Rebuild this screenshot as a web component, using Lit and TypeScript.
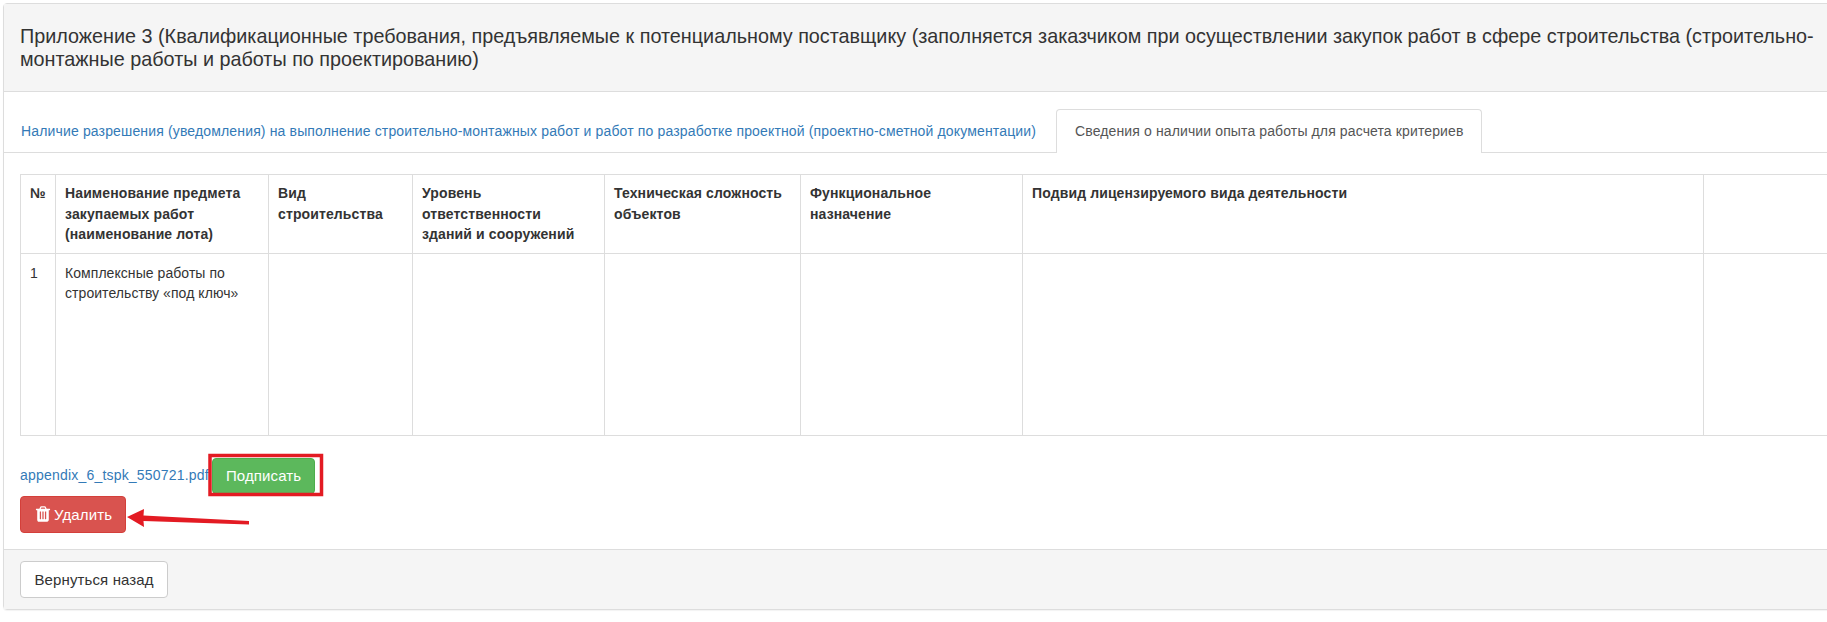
import { LitElement, html, css, svg } from "lit";
import { customElement } from "lit/decorators.js";

const COLS = [35, 213, 144, 192, 196, 222, 681, 163];
const HEADERS = [
  html`№`,
  html`Наименование предмета<br />закупаемых работ<br />(наименование лота)`,
  html`Вид<br />строительства`,
  html`Уровень<br />ответственности<br />зданий и сооружений`,
  html`Техническая сложность<br />объектов`,
  html`Функциональное<br />назначение`,
  html`Подвид лицензируемого вида деятельности`,
  html``,
];
const TRASH =
  "M704 1376v-704q0-14-9-23t-23-9h-64q-14 0-23 9t-9 23v704q0 14 9 23t23 9h64q14 0 23-9t9-23zm256 0v-704q0-14-9-23t-23-9h-64q-14 0-23 9t-9 23v704q0 14 9 23t23 9h64q14 0 23-9t9-23zm256 0v-704q0-14-9-23t-23-9h-64q-14 0-23 9t-9 23v704q0 14 9 23t23 9h64q14 0 23-9t9-23zm-544-992h448l-48-117q-7-9-17-11h-317q-10 2-17 11zm928 32v64q0 14-9 23t-23 9h-96v948q0 83-47 143.5t-113 60.5h-832q-66 0-113-58.5t-47-141.5v-952h-96q-14 0-23-9t-9-23v-64q0-14 9-23t23-9h309l70-167q15-37 54-63t79-26h320q40 0 79 26t54 63l70 167h309q14 0 23 9t9 23z";

@customElement("app-root")
export class AppRoot extends LitElement {
  static styles = css`
    :host {
      display: block;
      position: relative;
      width: 100%;
      height: 622px;
      overflow: hidden;
      background: #fff;
      font-family: "Liberation Sans", Arial, sans-serif;
      font-size: 14px;
      color: #333;
    }
    .panel {
      margin: 3px 0 0 3px;
      width: 1880px;
      border: 1px solid #ddd;
      border-radius: 4px;
      box-sizing: border-box;
      box-shadow: 0 1px 1px rgba(0, 0, 0, 0.05);
    }
    .heading {
      background: #f5f5f5;
      border-bottom: 1px solid #ddd;
      padding: 21px 16px 21px;
      font-size: 19.8px;
      line-height: 22.5px;
      font-weight: 400;
      margin: 0;
      color: #333;
    }
    .heading span {
      display: block;
      width: 1810px;
    }
    .tabs {
      display: flex;
      margin: 17px 0 0;
      border-bottom: 1px solid #ddd;
      height: 43px;
    }
    .tab {
      display: block;
      padding: 11px 18px;
      height: 20px;
      line-height: 20px;
      border: 1px solid transparent;
      border-bottom: 0;
      border-radius: 4px 4px 0 0;
      color: #337ab7;
      white-space: nowrap;
      letter-spacing: 0.15px;
    }
    .tab.first {
      margin-left: -2px;
      padding-right: 19px;
    }
    .tab.active {
      color: #555;
      background: #fff;
      border-color: #ddd;
      height: 21px;
      padding-bottom: 11px;
      position: relative;
      z-index: 1;
      letter-spacing: 0.12px;
    }
    .body {
      padding: 21px 16px 16px;
    }
    table {
      border-collapse: collapse;
      table-layout: fixed;
      width: 100%;
    }
    th,
    td {
      border: 1px solid #ddd;
      padding: 8px 9px;
      vertical-align: top;
      text-align: left;
      line-height: 20.6px;
    }
    th {
      font-weight: 700;
      color: #333;
      letter-spacing: 0.12px;
    }
    td {
      padding-top: 9px;
      letter-spacing: 0.06px;
    }
    tbody tr {
      height: 182px;
    }
    .sign-row {
      display: flex;
      align-items: center;
      margin-top: 22px;
      height: 36px;
      gap: 3px;
    }
    .link {
      color: #337ab7;
      letter-spacing: 0.2px;
      position: relative;
      top: -1px;
    }
    .btn {
      display: inline-flex;
      align-items: center;
      gap: 2px;
      box-sizing: border-box;
      border: 1px solid transparent;
      border-radius: 4px;
      padding: 0 13.5px;
      height: 37px;
      font-size: 15px;
      letter-spacing: 0.12px;
      white-space: nowrap;
    }
    .btn.green {
      background: #5cb85c;
      border-color: #4cae4c;
      color: #fff;
      height: 36px;
      padding: 0 13px;
    }
    .btn.red {
      background: #d9534f;
      border-color: #d43f3a;
      color: #fff;
      margin-top: 2px;
      padding: 0 13px;
    }
    .btn.plain {
      background: #fff;
      border-color: #ccc;
      color: #333;
    }
    .btn svg {
      width: 18px;
      height: 18px;
      fill: #fff;
    }
    .footer {
      background: #f5f5f5;
      border-top: 1px solid #ddd;
      padding: 11px 16px;
      display: flex;
    }
    .mark {
      position: absolute;
      left: 0;
      top: 0;
      pointer-events: none;
    }
  `;

  render() {
    return html`
      <div class="panel">
        <h3 class="heading">
          <span>Приложение 3 (Квалификационные требования, предъявляемые к потенциальному поставщику (заполняется заказчиком при осуществлении закупок работ в сфере строительства (строительно-монтажные работы и работы по проектированию)</span>
        </h3>
        <div class="tabs">
          <a class="tab first">Наличие разрешения (уведомления) на выполнение строительно-монтажных работ и работ по разработке проектной (проектно-сметной документации)</a>
          <a class="tab active">Сведения о наличии опыта работы для расчета критериев</a>
        </div>
        <div class="body">
          <table>
            <colgroup>
              ${COLS.map((w) => html`<col style="width:${w}px" />`)}
            </colgroup>
            <thead>
              <tr>${HEADERS.map((h) => html`<th>${h}</th>`)}</tr>
            </thead>
            <tbody>
              <tr>
                <td>1</td>
                <td>Комплексные работы по строительству «под ключ»</td>
                ${COLS.slice(2).map(() => html`<td></td>`)}
              </tr>
            </tbody>
          </table>
          <div class="sign-row">
            <a class="link">appendix_6_tspk_550721.pdf</a>
            <span class="btn green">Подписать</span>
          </div>
          <span class="btn red">
            <svg viewBox="0 0 1792 1792"><path d=${TRASH}></path></svg>
            Удалить
          </span>
        </div>
        <div class="footer"><span class="btn plain">Вернуться назад</span></div>
      </div>
      <svg class="mark" width="1827" height="622">
        ${svg`<rect x="210" y="455.5" width="111.5" height="39" fill="none" stroke="#e31b23" stroke-width="3.5"></rect>
        <polygon points="127,517 144,509 143.5,515.5 249,521 249,524.5 143.5,521 144,527" fill="#e31b23"></polygon>`}
      </svg>
    `;
  }
}
